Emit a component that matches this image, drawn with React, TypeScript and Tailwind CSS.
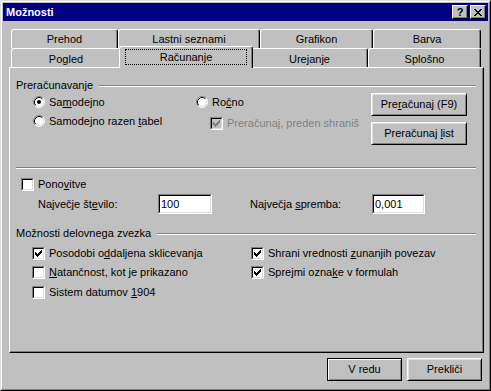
import React from 'react';

// Classic Win9x-style "Možnosti" dialog (Excel, Računanje tab)

function CheckMark({ color }: { color: string }) {
  const rects: [number, number, number][] = [
    [6, 0, 1],
    [5, 1, 2],
    [0, 2, 1],
    [4, 2, 3],
    [0, 3, 2],
    [3, 3, 3],
    [0, 4, 5],
    [1, 5, 3],
    [2, 6, 1],
  ];
  return (
    <svg width="7" height="7" viewBox="0 0 7 7" shapeRendering="crispEdges">
      {rects.map(([x, y, w], i) => (
        <rect key={i} x={x} y={y} width={w} height={1} fill={color} />
      ))}
    </svg>
  );
}

function CheckBox({ checked, disabled }: { checked?: boolean; disabled?: boolean }) {
  return (
    <div className="w-[13px] h-[13px] shrink-0 border border-t-[#808080] border-l-[#808080] border-b-white border-r-white">
      <div
        className={
          'w-full h-full border border-t-black border-l-black border-b-[#dfdfdf] border-r-[#dfdfdf] flex items-center justify-center ' +
          (disabled ? 'bg-[#c0c0c0]' : 'bg-white')
        }
      >
        {checked && <CheckMark color={disabled ? '#808080' : '#000000'} />}
      </div>
    </div>
  );
}

function Radio({ checked }: { checked?: boolean }) {
  return (
    <svg width="12" height="12" viewBox="0 0 12 12" className="shrink-0">
      <circle cx="6" cy="6" r="5" fill="white" />
      <path d="M2.11 9.89A5.5 5.5 0 0 1 9.89 2.11" stroke="#808080" fill="none" />
      <path d="M9.89 2.11A5.5 5.5 0 0 1 2.11 9.89" stroke="white" fill="none" />
      <path d="M2.82 9.18A4.5 4.5 0 0 1 9.18 2.82" stroke="black" fill="none" />
      <path d="M9.18 2.82A4.5 4.5 0 0 1 2.82 9.18" stroke="#dfdfdf" fill="none" />
      {checked && <circle cx="6" cy="6" r="2" fill="black" />}
    </svg>
  );
}

function Etched({ className = '' }: { className?: string }) {
  return <div className={'h-[2px] border-t border-t-[#808080] border-b border-b-white ' + className} />;
}

function Button({ children, wide, isDefault }: { children: React.ReactNode; wide?: boolean; isDefault?: boolean }) {
  return (
    <div
      className={
        'h-[23px] flex items-center justify-center ' +
        (wide ? 'w-[96px] ' : 'w-[75px] ') +
        (isDefault
          ? 'border border-black shadow-[inset_1px_1px_white,inset_-1px_-1px_#808080]'
          : 'border border-t-white border-l-white border-b-black border-r-black shadow-[inset_1px_1px_#dfdfdf,inset_-1px_-1px_#808080]')
      }
    >
      {children}
    </div>
  );
}

function Field({ value, className }: { value: string; className: string }) {
  return (
    <div className={'h-[20px] border border-t-[#808080] border-l-[#808080] border-b-white border-r-white ' + className}>
      <div className="w-full h-full border border-t-black border-l-black border-b-[#dfdfdf] border-r-[#dfdfdf] bg-white flex items-center pl-[1px]">
        {value}
      </div>
    </div>
  );
}

function CloseGlyph() {
  const rows: [number, number][][] = [
    [[0, 2], [6, 2]],
    [[1, 2], [5, 2]],
    [[2, 4]],
    [[3, 2]],
    [[2, 4]],
    [[1, 2], [5, 2]],
    [[0, 2], [6, 2]],
  ];
  return (
    <svg width="8" height="7" viewBox="0 0 8 7" shapeRendering="crispEdges">
      {rows.map((segs, y) =>
        segs.map(([x, w], i) => <rect key={y + '-' + i} x={x} y={y} width={w} height={1} fill="black" />)
      )}
    </svg>
  );
}

const U = ({ children }: { children: React.ReactNode }) => <span className="underline underline-offset-[1px]">{children}</span>;

const tabBase =
  'h-[19px] flex justify-center pt-[3px] border-l border-t border-r border-white border-r-black rounded-t-[3px] shadow-[inset_-1px_0_#808080]';

export default function App() {
  return (
    <div className="w-[491px] h-[391px] border border-t-[#dfdfdf] border-l-[#dfdfdf] border-r-black border-b-black font-['Liberation_Sans',Arial,sans-serif] text-[11px] leading-[13px] text-black select-none">
      <div className="w-full h-full border border-t-white border-l-white border-r-[#808080] border-b-[#808080] bg-[#c0c0c0] p-[1px] flex flex-col">
        {/* Title bar */}
        <div className="h-[18px] bg-[#000080] flex items-center pl-[3px] pr-[2px]">
          <span className="text-white font-bold flex-1">Možnosti</span>
          <div className="flex gap-[2px]">
            <div className="w-[16px] h-[14px] flex items-center justify-center border border-t-white border-l-white border-b-black border-r-black shadow-[inset_-1px_-1px_#808080] bg-[#c0c0c0] font-bold text-[11px] leading-[11px]">
              ?
            </div>
            <div className="w-[16px] h-[14px] flex items-center justify-center border border-t-white border-l-white border-b-black border-r-black shadow-[inset_-1px_-1px_#808080] bg-[#c0c0c0]">
              <CloseGlyph />
            </div>
          </div>
        </div>

        {/* Tabs */}
        <div className="pl-[8px] mt-[8px]">
          <div className="flex">
            <div className={tabBase + ' w-[107px]'}>Prehod</div>
            <div className={tabBase + ' w-[142px]'}>Lastni seznami</div>
            <div className={tabBase + ' w-[113px]'}>Grafikon</div>
            <div className={tabBase + ' w-[108px]'}>Barva</div>
          </div>
          <div className="flex h-[19px]">
            <div className={tabBase + ' w-[110px] pt-[4px]'}>Pogled</div>
            <div className="relative z-10 -mx-[2px] -mt-[2px] w-[134px] h-[22px] bg-[#c0c0c0] border-l border-t border-r border-white border-r-black rounded-t-[3px] shadow-[inset_-1px_0_#808080] pt-[2px] px-[5px]">
              <div className="h-[16px] border border-dotted border-black flex items-center justify-center">Računanje</div>
            </div>
            <div className={tabBase + ' w-[117px] pt-[4px]'}>Urejanje</div>
            <div className={tabBase + ' w-[113px] pt-[4px]'}>Splošno</div>
          </div>
        </div>

        {/* Panel */}
        <div className="ml-[6px] w-[475px] h-[286px] border border-t-white border-l-white border-r-black border-b-black shadow-[inset_-1px_-1px_#808080] flex flex-col">
          {/* Preračunavanje */}
          <div className="mt-[11px] h-[13px] flex items-center pl-[6px] pr-[7px]">
            <span>Preračunavanje</span>
            <Etched className="flex-1 ml-[6px]" />
          </div>
          <div className="mt-[1px] flex">
            <div className="w-[186px] pl-[23px] flex flex-col">
              <div className="mt-[1px] h-[16px] flex items-center gap-[4px]">
                <Radio checked />
                <span>
                  Sa<U>m</U>odejno
                </span>
              </div>
              <div className="mt-[3px] h-[16px] flex items-center gap-[4px]">
                <Radio />
                <span>
                  Samodejno razen <U>t</U>abel
                </span>
              </div>
            </div>
            <div className="w-[175px] flex flex-col">
              <div className="mt-[1px] h-[16px] flex items-center gap-[4px]">
                <Radio />
                <span>
                  Ro<U>č</U>no
                </span>
              </div>
              <div className="mt-[5px] h-[16px] pl-[14px] flex items-center gap-[4px]">
                <CheckBox checked disabled />
                <span className="text-[#808080]">Preračunaj, preden shraniš</span>
              </div>
            </div>
            <div className="flex flex-col gap-[6px]">
              <Button wide>
                <span>
                  Pre<U>r</U>ačunaj (F9)
                </span>
              </Button>
              <Button wide>
                <span>
                  Preračunaj <U>l</U>ist
                </span>
              </Button>
            </div>
          </div>

          <Etched className="mt-[22px] ml-[6px] mr-[7px]" />

          {/* Ponovitve */}
          <div className="mt-[7px] h-[16px] pl-[11px] flex items-center gap-[4px]">
            <CheckBox />
            <span>
              Pono<U>v</U>itve
            </span>
          </div>
          <div className="mt-[2px] h-[20px] pl-[28px] flex items-center">
            <span className="w-[120px]">
              Največje št<U>e</U>vilo:
            </span>
            <Field value="100" className="w-[54px]" />
            <span className="ml-[38px] w-[122px]">
              Največja <U>s</U>premba:
            </span>
            <Field value="0,001" className="w-[53px]" />
          </div>

          {/* Možnosti delovnega zvezka */}
          <div className="mt-[13px] h-[13px] flex items-center pl-[6px] pr-[7px]">
            <span>Možnosti delovnega zvezka</span>
            <Etched className="flex-1 ml-[6px]" />
          </div>
          <div className="mt-[5px] flex">
            <div className="w-[241px] pl-[22px] flex flex-col">
              <div className="h-[16px] flex items-center gap-[4px]">
                <CheckBox checked />
                <span>
                  Posodobi o<U>d</U>daljena sklicevanja
                </span>
              </div>
              <div className="mt-[3px] h-[16px] flex items-center gap-[4px]">
                <CheckBox />
                <span>
                  <U>N</U>atančnost, kot je prikazano
                </span>
              </div>
              <div className="mt-[4px] h-[16px] flex items-center gap-[4px]">
                <CheckBox />
                <span>
                  Sistem datumov <U>1</U>904
                </span>
              </div>
            </div>
            <div className="flex flex-col">
              <div className="h-[16px] flex items-center gap-[4px]">
                <CheckBox checked />
                <span>
                  Shrani vrednosti <U>z</U>unanjih povezav
                </span>
              </div>
              <div className="mt-[3px] h-[16px] flex items-center gap-[4px]">
                <CheckBox checked />
                <span>
                  Sprejmi ozna<U>k</U>e v formulah
                </span>
              </div>
            </div>
          </div>
        </div>

        {/* Dialog buttons */}
        <div className="mt-[5px] flex justify-end gap-[5px] pr-[6px]">
          <Button isDefault>V redu</Button>
          <Button>Prekliči</Button>
        </div>
      </div>
    </div>
  );
}
